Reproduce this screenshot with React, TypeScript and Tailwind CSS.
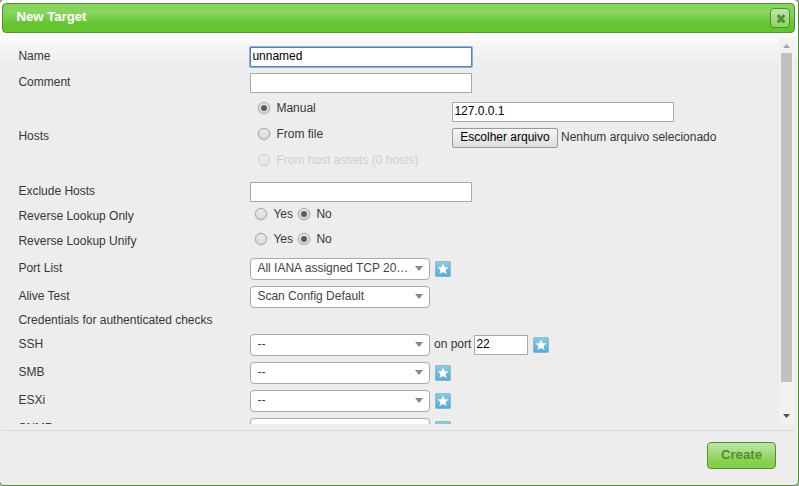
import React from "react";

function Radio({ checked = false, disabled = false }: { checked?: boolean; disabled?: boolean }) {
  return (
    <span
      className={
        "flex h-3 w-3 shrink-0 items-center justify-center rounded-full border border-[#a8a8a8] bg-linear-to-b from-[#ececec] to-[#dadada] shadow-[0_0_0_0.5px_#c8c8c8] " +
        (disabled ? "opacity-40" : "")
      }
    >
      {checked && <span className="h-1.5 w-1.5 rounded-full bg-[#5c5c5c]" />}
    </span>
  );
}

function Star() {
  return (
    <svg className="mt-[3px] ml-[5px] h-4 w-4 shrink-0" viewBox="0 0 16 16">
      <defs>
        <linearGradient id="sky" x1="0" y1="0" x2="0" y2="1">
          <stop offset="0" stopColor="#93c9de" />
          <stop offset="1" stopColor="#4fadd4" />
        </linearGradient>
      </defs>
      <rect x="0.5" y="0.5" width="15" height="15" rx="1" fill="url(#sky)" stroke="#6fa9c0" strokeOpacity="0.6" />
      <path
        d="M8 2.6 9.6 6.2 13.4 6.5 10.6 9.1 11.5 13 8 11 4.5 13 5.4 9.1 2.6 6.5 6.4 6.2Z"
        fill="#fff"
      />
    </svg>
  );
}

function Select({ value }: { value: string }) {
  return (
    <div className="flex h-[22px] w-[180px] shrink-0 rounded-[4px] border border-[#aaa] bg-white pt-[2px] pl-[6px]">
      <span className="w-[154px] overflow-hidden pl-[0.4px] text-ellipsis whitespace-nowrap text-[#444]">{value}</span>
      <svg className="mt-[5px] ml-[4px] h-[5px] w-[8px]" viewBox="0 0 8 5">
        <path d="M0 0H8L4 5Z" fill="#888" />
      </svg>
    </div>
  );
}

function Field({ value = "", width = "w-[222px]", focus = false }: { value?: string; width?: string; focus?: boolean }) {
  return (
    <div
      className={
        "h-5 shrink-0 border bg-white pt-px pl-[1.4px] text-black " +
        width +
        (focus ? " border-[#5782b0] shadow-[0_0_0_1px_#8fafd0] rounded-[1px]" : " border-[#a9a9a9]")
      }
    >
      {value}
    </div>
  );
}

function Row({
  label,
  height,
  labelPad,
  pad = "pt-[3px]",
  children,
}: {
  label: string;
  height: string;
  labelPad: string;
  pad?: string;
  children?: React.ReactNode;
}) {
  return (
    <div className={"flex shrink-0 " + height}>
      <div className={"w-[232px] shrink-0 pl-[0.4px] whitespace-nowrap " + labelPad}>{label}</div>
      <div className={"flex items-start " + pad}>{children}</div>
    </div>
  );
}

function YesNo() {
  return (
    <div className="flex items-center pl-[5px]">
      <Radio />
      <span className="w-[31px] pl-[6.4px]">Yes</span>
      <Radio checked />
      <span className="pl-[6.4px]">No</span>
    </div>
  );
}

export default function App() {
  return (
    <div className="h-[486px] w-[799px] overflow-hidden bg-[#b0b0b0] font-['Liberation_Sans',Arial,sans-serif] text-[12px] leading-[14px] text-[#393637]">
      <div className="-mt-px -ml-px flex h-[487px] w-[800px] flex-col rounded-[5px] border border-[#519032] bg-[#ededed] bg-linear-to-b from-white from-[30px] to-[#ededed] to-[62px] pt-[3px] pl-[2px]">
        <div className="flex h-[30px] w-[793px] shrink-0 items-start justify-between rounded-[4px] border border-[#519032] bg-linear-to-b from-[#87d45f] from-30% to-[#66c430] to-70% pr-[4px] pl-[13.4px]">
          <h1 className="pt-[5px] text-[13.2px] leading-[16px] font-bold text-white">New Target</h1>
          <button className="mt-[4px] flex h-5 w-5 items-center justify-center rounded-[4px] border border-[#519032] bg-linear-to-b from-[#bfe5a8] to-[#8ed45b]">
            <svg className="mt-px ml-px h-[10px] w-[10px]" viewBox="0 0 10 10">
              <path
                d="M1 1.8 2.2 .6H3.2L5 2.4 6.8 .6H7.8L9 1.8V2.8L7 4.8 9 6.8V7.8L7.8 9H6.8L5 7.2 3.2 9H2.2L1 7.8V6.8L3 4.8 1 2.8Z"
                fill="#519032"
              />
            </svg>
          </button>
        </div>

        <div className="mt-[5px] flex h-[386px] w-[792px] shrink-0 overflow-hidden">
          <div className="flex w-[777px] shrink-0 flex-col pt-[6px] pl-[16px]">
            <Row label="Name" height="h-[26px]" labelPad="pt-[5px]">
              <Field value="unnamed" focus />
            </Row>
            <Row label="Comment" height="h-[26px]" labelPad="pt-[5px]">
              <Field />
            </Row>
            <Row label="Hosts" height="h-[83px]" labelPad="pt-[33px]" pad="pt-[5px]">
              <div className="flex w-[202px] flex-col gap-[12px] pl-[8px]">
                <div className="flex items-center gap-[6.4px]">
                  <Radio checked />
                  <span>Manual</span>
                </div>
                <div className="flex items-center gap-[6.4px]">
                  <Radio />
                  <span>From file</span>
                </div>
                <div className="flex items-center gap-[6.4px]">
                  <Radio disabled />
                  <span className="whitespace-nowrap text-[#cfcfcf]">From host assets (0 hosts)</span>
                </div>
              </div>
              <div className="flex flex-col gap-[6px] pt-px">
                <Field value="127.0.0.1" />
                <div className="flex">
                  <button className="flex h-5 w-[106px] items-start justify-center rounded-[2px] border border-[#999] bg-linear-to-b from-[#f6f6f6] to-[#dddddd] pt-px text-black">
                    Escolher arquivo
                  </button>
                  <span className="ml-[3px] pt-[2px] whitespace-nowrap">Nenhum arquivo selecionado</span>
                </div>
              </div>
            </Row>
            <Row label="Exclude Hosts" height="h-[26px]" labelPad="pt-[5px]">
              <Field />
            </Row>
            <Row label="Reverse Lookup Only" height="h-[25px]" labelPad="pt-[4px]" pad="pt-[2px]">
              <YesNo />
            </Row>
            <Row label="Reverse Lookup Unify" height="h-[25px]" labelPad="pt-[4px]" pad="pt-[2px]">
              <YesNo />
            </Row>
            <Row label="Port List" height="h-[28px]" labelPad="pt-[6px]">
              <Select value="All IANA assigned TCP 20…" />
              <Star />
            </Row>
            <Row label="Alive Test" height="h-[28px]" labelPad="pt-[6px]">
              <Select value="Scan Config Default" />
            </Row>
            <Row label="Credentials for authenticated checks" height="h-[20px]" labelPad="pt-[2px]" />
            <Row label="SSH" height="h-[28px]" labelPad="pt-[6px]">
              <Select value="--" />
              <span className="w-[44px] pt-[3px] pl-[4px] whitespace-nowrap">on port</span>
              <div className="pt-px">
                <Field value="22" width="w-[54px]" />
              </div>
              <Star />
            </Row>
            <Row label="SMB" height="h-[28px]" labelPad="pt-[6px]">
              <Select value="--" />
              <Star />
            </Row>
            <Row label="ESXi" height="h-[28px]" labelPad="pt-[6px]">
              <Select value="--" />
              <Star />
            </Row>
            <Row label="SNMP" height="h-[28px]" labelPad="pt-[6px]">
              <Select value="--" />
              <Star />
            </Row>
          </div>
          <div className="flex w-[15px] shrink-0 flex-col items-center bg-[#f1f1f1]">
            <svg className="h-[15px] w-[15px] shrink-0" viewBox="0 0 15 15">
              <path d="M4 10H11L7.5 6Z" fill="#a3a3a3" />
            </svg>
            <div className="h-[329px] w-[11px] shrink-0 bg-[#c1c1c1]" />
            <svg className="mt-[27px] h-[15px] w-[15px] shrink-0" viewBox="0 0 15 15">
              <path d="M4 5H11L7.5 9Z" fill="#505050" />
            </svg>
          </div>
        </div>

        <div className="mt-[6px] flex w-[793px] grow justify-end border-t border-[#dadada] pt-[11px] pr-[19px]">
          <button className="flex h-[27px] w-[69px] justify-center rounded-[4px] border border-[#519032] bg-linear-to-b from-[#bfe5a8] to-[#87d04c] to-75% pt-[4px] text-[13.2px] leading-[16px] font-bold text-[#519032]">
            Create
          </button>
        </div>
      </div>
    </div>
  );
}
